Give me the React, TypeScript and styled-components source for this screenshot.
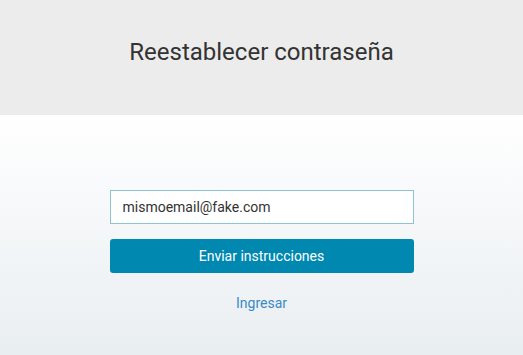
import React from "react";
import styled, { createGlobalStyle } from "styled-components";

const GlobalStyle = createGlobalStyle`
  html, body {
    margin: 0;
    padding: 0;
    height: 100%;
  }
  body {
    font-family: Roboto, "Liberation Sans", sans-serif;
    background: linear-gradient(#ffffff 115px, #e9eef1 100%);
  }
  #root {
    min-height: 100%;
  }
`;

const Page = styled.div`
  min-height: 355px;
  display: flex;
  flex-direction: column;
`;

const Header = styled.header`
  height: 115px;
  box-sizing: border-box;
  padding-top: 36px;
  background: #ececec;
  text-align: center;
`;

const Title = styled.h1`
  margin: 0;
  font-size: 24px;
  line-height: 32px;
  font-weight: 400;
  color: #333333;
`;

const Form = styled.form`
  width: 304px;
  margin: 75px auto 0;
  display: flex;
  flex-direction: column;
  gap: 15px;
`;

const Input = styled.input`
  box-sizing: border-box;
  height: 34px;
  width: 100%;
  padding: 0 12px;
  border: 1px solid #8ec2d5;
  border-radius: 0;
  background: #ffffff;
  font-family: Roboto, "Liberation Sans", sans-serif;
  font-size: 14px;
  color: #333333;
  outline: none;
  caret-color: #222;
`;

const Button = styled.button`
  height: 34px;
  border: none;
  border-radius: 3px;
  background: #0088b0;
  color: #ffffff;
  font-family: Roboto, "Liberation Sans", sans-serif;
  font-size: 14px;
  cursor: pointer;
`;

const LinkRow = styled.div`
  text-align: center;
  margin-top: 5px;
`;

const Link = styled.a`
  font-size: 14px;
  color: #3a8ac4;
  text-decoration: none;
`;

export default function App() {
  return (
    <Page>
      <GlobalStyle />
      <Header>
        <Title>Reestablecer contraseña</Title>
      </Header>
      <Form onSubmit={(e) => e.preventDefault()}>
        <Input type="email" defaultValue="mismoemail@fake.com" autoFocus />
        <Button type="submit">Enviar instrucciones</Button>
        <LinkRow>
          <Link href="#">Ingresar</Link>
        </LinkRow>
      </Form>
    </Page>
  );
}
